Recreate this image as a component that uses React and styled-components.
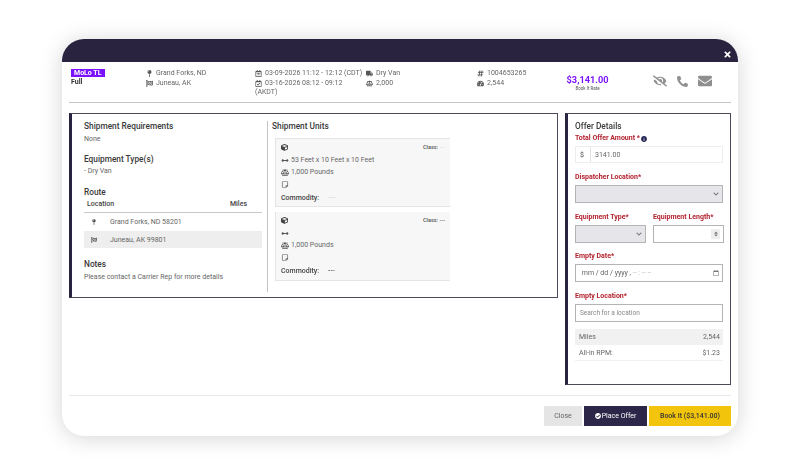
import React from 'react';
import styled, { createGlobalStyle } from 'styled-components';
import { FaMapPin, FaFlagCheckered, FaRegCalendarAlt, FaRegCalendarCheck, FaTruck, FaBalanceScale, FaHashtag, FaTachometerAlt, FaEyeSlash, FaPhoneAlt, FaEnvelope, FaCube, FaCheckCircle, FaInfoCircle, FaTimes, FaArrowsAltH, FaRegStickyNote, FaChevronDown, FaRegCalendar, FaSort } from 'react-icons/fa';

const Global = createGlobalStyle`
  html, body { margin: 0; padding: 0; background: #fff; }
  body { width: 800px; height: 475px; overflow: hidden; font-family: Roboto, "Liberation Sans", sans-serif; color: #666; }
  * { box-sizing: border-box; }
`;
const Page = styled.div`
  width: 800px; height: 475px; padding: 39px 62px; background: #fff;
`;
const Modal = styled.div`
  width: 676px; height: 397px; background: #fff; border-radius: 22px; overflow: hidden;
  box-shadow: 0 2px 22px rgba(0,0,0,.17);
  display: flex; flex-direction: column;
`;
const TopBar = styled.div`
  height: 23px; flex: none; background: #29233f; display: flex; justify-content: flex-end;
  align-items: flex-end; padding: 0 6px 3px 0; color: #fff; font-size: 9px;
`;
const Content = styled.div`
  flex: 1; padding: 0 7px; display: flex; flex-direction: column; filter: blur(.3px);
`;
const Summary = styled.div`
  height: 41px; flex: none; border-bottom: 1px solid #c4c4c4; display: grid;
  grid-template-columns: 75px 109px 111px 111px 90px 86px 1fr; padding: 7px 0 0 2px;
  font-size: 7px; line-height: 9.5px; color: #666;
`;
const Cell = styled.div` display: flex; flex-direction: column; `;
const Badge = styled.span`
  align-self: flex-start; background: #7a12ff; color: #fff; font-weight: 700; font-size: 7px;
  line-height: 8px; padding: 0 3px; margin-bottom: 1px;
`;
const Strong = styled.span` font-weight: 700; color: #333; font-size: 7px; line-height: 9px; `;
const InfoLine = styled.div`
  display: flex; align-items: center; gap: 3px; white-space: nowrap; height: 9.5px;
  svg { width: 7px; height: 7px; color: #555; flex: none; }
`;
const Price = styled.div`
  display: flex; flex-direction: column; align-items: center; width: 41px; padding-top: 5px;
  color: #7a12ff; font-weight: 700; font-size: 9.2px; line-height: 11px; white-space: nowrap;
  small { color: #555; font-weight: 400; font-size: 4.5px; line-height: 7px; }
`;
const Actions = styled.div`
  display: flex; align-items: center; gap: 10px; padding-top: 3px; color: #8f8f8f; height: 21px;
`;
const Panels = styled.div`
  flex: 1; display: grid; grid-template-columns: 489px 166px; column-gap: 7px; padding-top: 10px; align-items: start;
`;
const Panel = styled.div`
  border: 1px solid #4a4a5a; border-left: 3px solid #29233f; background: #fff;
`;
const LeftPanel = styled(Panel)`
  height: 185px; display: grid; grid-template-columns: 184px 1fr; align-items: start; padding: 7px 0 0 12px;
`;
const ReqCol = styled.div` height: 171px; border-right: 1px solid #c4c4c4; padding-right: 5px; `;
const UnitCol = styled.div` padding-left: 4px; `;
const H = styled.div`
  font-size: 8.3px; font-weight: 500; color: #3a3a3a; line-height: 10px; white-space: nowrap;
`;
const P = styled.div` font-size: 7px; color: #666; line-height: 9px; `;
const Block = styled.div` margin-top: ${p => p.$t}px; `;
const RouteHead = styled.div`
  display: flex; justify-content: space-between; padding: 2px 15px 0 3px; height: 16px;
  font-size: 7px; font-weight: 500; color: #444; line-height: 11px; border-bottom: 1px solid #c9c9c9;
`;
const RouteRow = styled.div`
  height: ${p => (p.$alt ? 17 : 18)}px; display: flex; align-items: center; font-size: 7px; color: #666; padding-left: 7px; gap: 13px;
  background: ${p => (p.$alt ? '#eeeeee' : '#fff')};
  svg { width: 6px; height: 6px; color: #555; flex: none; }
`;
const Unit = styled.div`
  margin: ${p => (p.$top ? 7 : 5)}px 0 0 3px; width: 175px; height: 69px; background: #f7f7f7; border-bottom: 1px solid #e4e4e4;
  border-left: 1px solid #e4e4e4; border-top: ${p => (p.$top ? '1px solid #e4e4e4' : 'none')};
  padding: 5px 0 0 5px; font-size: 7px; color: #666;
`;
const UnitTop = styled.div`
  display: flex; justify-content: space-between; padding-right: 5px; height: 10px;
  font-size: 5.5px; font-weight: 500; color: #555;
  svg { width: 7px; height: 7px; color: #444; }
`;
const UnitLine = styled.div`
  display: flex; align-items: center; gap: 2px; height: 12px; white-space: nowrap;
  svg { width: 8px; height: 7px; color: #555; flex: none; }
`;
const Commodity = styled.div`
  display: flex; gap: 9px; height: 14px; margin-top: 1px; align-items: center; font-size: 7px; font-weight: 500; color: #444;
`;
const Dashes = styled.span` color: ${p => (p.$faint ? '#d8d8d8' : '#555')}; `;
const Offer = styled(Panel)`
  height: 272px; padding: 7px 7px 0 7px;
`;
const Label = styled.div`
  color: #b3232f; font-size: 7px; font-weight: 700; line-height: 9px; display: flex; align-items: center; gap: 1px; white-space: nowrap;
  svg { width: 6px; height: 6px; color: #225; }
`;
const Field = styled.div`
  height: ${p => (p.$soft ? 17 : 18)}px; margin-top: 3px; border: 1px solid ${p => (p.$soft ? '#eee' : '#b4b4b4')};
  background: ${p => (p.$grey ? '#e6e6ea' : '#fff')}; display: flex; align-items: center; justify-content: space-between;
  font-size: 7px; color: #666; padding: 0 3px 0 4px;
  svg { width: 6px; height: 6px; color: #777; flex: none; }
`;
const Addon = styled.span`
  width: 11px; height: 100%; border-right: 1px solid #e3e3e3; display: flex; align-items: center; margin-right: 4px; color: #444;
`;
const Amount = styled.span` flex: 1; `;
const Two = styled.div` display: grid; grid-template-columns: 71px 71px; column-gap: 7px; `;
const Section = styled.div` margin-top: ${p => p.$t}px; `;
const Placeholder = styled.span` color: #888; font-size: 6.5px; `;
const Spinner = styled.span`
  width: 9px; height: 10px; background: #eee; display: flex; align-items: center; justify-content: center;
`;
const Faint = styled.span` color: #bbb; `;
const Stat = styled.div`
  height: 16px; display: flex; justify-content: space-between; align-items: center; padding: 0 3px 0 4px;
  font-size: 7px; color: #666; background: ${p => (p.$alt ? '#f1f1f1' : '#fff')};
  border-bottom: ${p => (p.$alt ? 'none' : '1px solid #f0f0f0')};
`;
const Footer = styled.div`
  height: 41px; flex: none; border-top: 1px solid #eaeaea;
  display: flex; justify-content: flex-end; align-items: flex-start; padding-top: 10px; gap: 2px;
`;
const Button = styled.button`
  height: 20px; width: ${p => p.$w}px; border: 0; padding: 0; background: ${p => p.$bg}; color: ${p => p.$fg};
  font: ${p => (p.$bold ? 500 : 400)} 7px Roboto, sans-serif; display: flex; align-items: center; justify-content: center; gap: 1px;
  svg { width: 6px; height: 6px; }
`;

export default function App() {
  return (
    <Page>
      <Global />
      <Modal>
        <TopBar><FaTimes /></TopBar>
        <Content>
          <Summary>
            <Cell><Badge>MoLo TL</Badge><Strong>Full</Strong></Cell>
            <Cell>
              <InfoLine><FaMapPin /> Grand Forks, ND</InfoLine>
              <InfoLine><FaFlagCheckered /> Juneau, AK</InfoLine>
            </Cell>
            <Cell>
              <InfoLine><FaRegCalendarAlt /> 03-09-2026 11:12 - 12:12 (CDT)</InfoLine>
              <InfoLine><FaRegCalendarCheck /> 03-16-2026 08:12 - 09:12</InfoLine>
              <span>(AKDT)</span>
            </Cell>
            <Cell>
              <InfoLine><FaTruck /> Dry Van</InfoLine>
              <InfoLine><FaBalanceScale /> 2,000</InfoLine>
            </Cell>
            <Cell>
              <InfoLine><FaHashtag /> 1004653265</InfoLine>
              <InfoLine><FaTachometerAlt /> 2,544</InfoLine>
            </Cell>
            <Price>$3,141.00<small>Book It Rate</small></Price>
            <Actions><FaEyeSlash size={14} /><FaPhoneAlt size={11} /><FaEnvelope size={14} /></Actions>
          </Summary>
          <Panels>
            <LeftPanel>
              <ReqCol>
                <H>Shipment Requirements</H>
                <Block $t={4}><P>None</P></Block>
                <Block $t={10}><H>Equipment Type(s)</H></Block>
                <Block $t={3}><P>- Dry Van</P></Block>
                <Block $t={11}><H>Route</H></Block>
                <RouteHead><span>Location</span><span>Miles</span></RouteHead>
                <RouteRow><FaMapPin /> Grand Forks, ND 58201</RouteRow>
                <RouteRow $alt><FaFlagCheckered /> Juneau, AK 99801</RouteRow>
                <Block $t={11}><H>Notes</H></Block>
                <Block $t={4}><P>Please contact a Carrier Rep for more details</P></Block>
              </ReqCol>
              <UnitCol>
                <H>Shipment Units</H>
                <Unit $top>
                  <UnitTop><FaCube /><span>Class: <Dashes $faint>---</Dashes></span></UnitTop>
                  <UnitLine><FaArrowsAltH /> 53 Feet x 10 Feet x 10 Feet</UnitLine>
                  <UnitLine><FaBalanceScale /> 1,000 Pounds</UnitLine>
                  <UnitLine><FaRegStickyNote /></UnitLine>
                  <Commodity><span>Commodity:</span><Dashes $faint>---</Dashes></Commodity>
                </Unit>
                <Unit>
                  <UnitTop><FaCube /><span>Class: <Dashes>---</Dashes></span></UnitTop>
                  <UnitLine><FaArrowsAltH /></UnitLine>
                  <UnitLine><FaBalanceScale /> 1,000 Pounds</UnitLine>
                  <UnitLine><FaRegStickyNote /></UnitLine>
                  <Commodity><span>Commodity:</span><Dashes>---</Dashes></Commodity>
                </Unit>
              </UnitCol>
            </LeftPanel>
            <Offer>
              <H>Offer Details</H>
              <Section $t={3}>
                <Label>Total Offer Amount *<FaInfoCircle /></Label>
                <Field $soft><Addon>$</Addon><Amount>3141.00</Amount></Field>
              </Section>
              <Section $t={10}>
                <Label>Dispatcher Location*</Label>
                <Field $grey><span /><FaChevronDown /></Field>
              </Section>
              <Two>
                <Section $t={10}>
                  <Label>Equipment Type*</Label>
                  <Field $grey><span /><FaChevronDown /></Field>
                </Section>
                <Section $t={10}>
                  <Label>Equipment Length*</Label>
                  <Field><span /><Spinner><FaSort /></Spinner></Field>
                </Section>
              </Two>
              <Section $t={9}>
                <Label>Empty Date*</Label>
                <Field><span>&nbsp;mm / dd / yyyy , <Faint>-- : -- --</Faint></span><FaRegCalendar /></Field>
              </Section>
              <Section $t={10}>
                <Label>Empty Location*</Label>
                <Field><Placeholder>Search for a location</Placeholder></Field>
              </Section>
              <Section $t={7}>
                <Stat $alt><span>Miles</span><span>2,544</span></Stat>
                <Stat><span>All-in RPM:</span><span>$1.23</span></Stat>
              </Section>
            </Offer>
          </Panels>
          <Footer>
            <Button $w={38} $bg="#e5e5e5" $fg="#666">Close</Button>
            <Button $w={63} $bg="#2c2648" $fg="#fff"><FaCheckCircle /> Place Offer</Button>
            <Button $w={82} $bg="#f2c40c" $fg="#333" $bold>Book It ($3,141.00)</Button>
          </Footer>
        </Content>
      </Modal>
    </Page>
  );
}
